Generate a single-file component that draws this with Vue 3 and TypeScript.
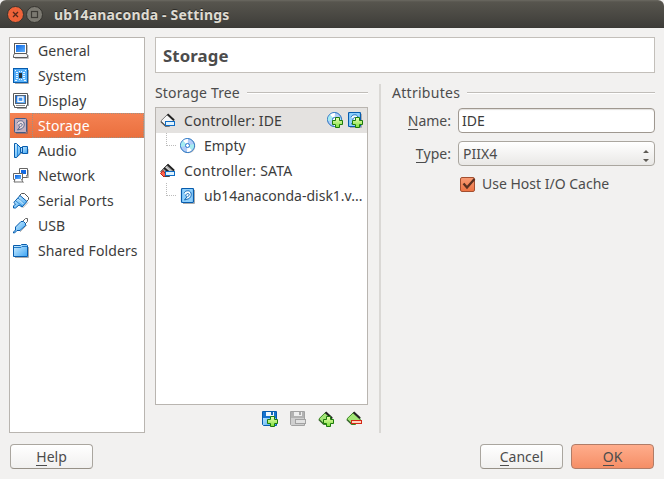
<script setup lang="ts">
import { ref } from 'vue'

interface Section { id: string; label: string }

const sections: Section[] = [
  { id: 'general', label: 'General' },
  { id: 'system', label: 'System' },
  { id: 'display', label: 'Display' },
  { id: 'storage', label: 'Storage' },
  { id: 'audio', label: 'Audio' },
  { id: 'network', label: 'Network' },
  { id: 'serial', label: 'Serial Ports' },
  { id: 'usb', label: 'USB' },
  { id: 'folders', label: 'Shared Folders' },
]
const current = ref('storage')
const hostCache = ref(true)
const name = ref('IDE')
</script>

<template>
  <div class="window">
    <svg class="defs" width="0" height="0" aria-hidden="true">
      <defs>
        <linearGradient id="blue" x1="0" y1="0" x2="1" y2="1">
          <stop offset="0" stop-color="#0a62e0" /><stop offset="1" stop-color="#62b4ff" />
        </linearGradient>
        <linearGradient id="sky" x1="0" y1="0" x2="1" y2="1">
          <stop offset="0" stop-color="#d8f2ff" /><stop offset="1" stop-color="#3ba4f4" />
        </linearGradient>
        <linearGradient id="green" x1="0" y1="0" x2="0" y2="1">
          <stop offset="0" stop-color="#f0ffb8" /><stop offset="1" stop-color="#7be03a" />
        </linearGradient>
        <symbol id="i-general" viewBox="0 0 16 16">
          <path d="M14.5 2v8M15.5 12v3.5H2" fill="none" stroke="#aaa" opacity=".7" />
          <rect x="1.5" y=".5" width="12" height="10" fill="#fff" stroke="#5b5b5b" />
          <rect x="3" y="2" width="9" height="7" fill="url(#blue)" />
          <path d="M1.5 10.5h12l1 2v2H.5v-2z" fill="#f4f4f4" stroke="#5b5b5b" />
        </symbol>
        <symbol id="i-system" viewBox="0 0 16 16">
          <rect x=".5" y=".5" width="14" height="14" fill="url(#blue)" stroke="#075cad" />
          <rect x="1" y="1" width="13" height="13" fill="#62bcfc" opacity=".75" />
          <path d="M15.5 2v13.5H2" fill="none" stroke="#aaa" />
          <rect x="6" y="5" width="3" height="5" fill="#26333d" />
          <path d="M3 4.5h2M3 6.500h2M3 8.500h2M3 10.500h2M10 4.500h2M10 6.500h2M10 8.500h2M10 10.500h2M6 3.500h1M8 3.500h1M6 11.500h1M8 11.500h1M2 2.500h1M2 12.500h2M12 2.500h1M11 12.500h2" stroke="#fff" opacity=".9" />
        </symbol>
        <symbol id="i-display" viewBox="0 0 16 16">
          <path d="M15.5 2v11M4 15.5h10" stroke="#aaa" />
          <path d="M.5.5h14v12h-1v2h-12v-2h-1z" fill="#fff" stroke="#5b5b5b" />
          <rect x="2.5" y="2.5" width="10" height="8" fill="url(#blue)" stroke="#567" />
          <rect x="5" y="4" width="5" height="4.5" fill="#3d91ef" stroke="#fff" stroke-width="1.4" />
          <path d="M3 12.5h9" stroke="#888" />
        </symbol>
        <symbol id="i-storage" viewBox="0 0 16 16">
          <rect x="1.5" y=".5" width="12" height="14" rx="1" fill="#c3b0c0" stroke="#425b88" />
          <path d="M14.5 2v13.5H3" fill="none" stroke="#a06a5f" />
          <path d="M4 5.3C5 2.200 10 1.800 11 5s-1.400 6-4 6.200l-2.500.8 2.300-3C5 8.400 6 5.300 8 5.600s1.400 2.400-.6 3" fill="#eadce2" stroke="#54648b" />
        </symbol>
        <symbol id="i-disk" viewBox="0 0 16 16">
          <rect x="1.500" y=".5" width="12" height="14" rx="1" fill="#8ed0fd" stroke="#075cad" stroke-width="1.200" />
          <path d="M14.5 2v13.5H3" fill="none" stroke="#aaa" />
          <path d="M4 5.300C5 2.200 10 1.800 11 5s-1.400 6-4 6.200l-2.500.8 2.300-3C5 8.400 6 5.300 8 5.600s1.400 2.400-.6 3" fill="#f2fbff" stroke="#1266b6" />
        </symbol>
        <symbol id="i-audio" viewBox="0 0 16 16">
          <path d="M3 15l5-4.500h7V6" fill="none" stroke="#aaa" />
          <path d="M1.500.5h2L8 5v4.500l-4.500 5h-2z" fill="url(#sky)" stroke="#075cad" />
          <path d="M7.500 4.500h2v-1h5v7h-5v-1h-2z" fill="url(#sky)" stroke="#075cad" />
          <path d="M4.500 2v11" stroke="#2b8ee2" />
          <path d="M9.500 4v6" stroke="#0759ad" />
        </symbol>
        <symbol id="i-network" viewBox="0 0 16 16">
          <path d="M6.500.5h8v7h-1l1 2h-8z" fill="#fff" stroke="#666" />
          <rect x="8" y="2" width="5" height="4" fill="#1169e5" />
          <path d="M.5 5.500h9v6h-1l1.500 2.500h-9l1-2.500H.5z" fill="#fff" stroke="#666" />
          <rect x="2" y="7" width="6" height="4" fill="url(#blue)" />
          <path d="M11 14.500H3M15.500 2v8" stroke="#bbb" />
        </symbol>
        <symbol id="i-serial" viewBox="0 0 16 16">
          <path d="M6.500 2.500L8.500.5h3l4 4v2L12 10z" fill="#fff" stroke="#555" />
          <path d="M.8 9.500L7 2.500l7 6-5 5.500-3-2-3.500 3h-2v-2l2-2z" fill="url(#sky)" stroke="#075cad" />
          <path d="M5 5l6.500 6M3 8l6 5" stroke="#2f87cf" />
          <path d="M6 6.500l4.500 4.500" stroke="#e4f6ff" />
          <path d="M9.500 15l5.500-5.500" stroke="#aaa" />
        </symbol>
        <symbol id="i-usb" viewBox="0 0 16 16">
          <path d="M9.500 3.500l3-3h2v3l-3 3" fill="#fff" stroke="#666" />
          <path d="M2.500 9L8 3.500h2.500l2 2v2L7 12.500H4L1.500 15H.5v-1l2-2z" fill="url(#sky)" stroke="#075cad" />
          <path d="M7 14l7-7" stroke="#bbb" />
        </symbol>
        <symbol id="i-folders" viewBox="0 0 16 16">
          <path d="M.5 2.500h7l1-1h5l1 1v11H.5z" fill="url(#sky)" stroke="#075cad" />
          <path d="M1 4.500h7l1-1h5" fill="none" stroke="#237ac6" />
          <path d="M15.500 4v10.500H2" fill="none" stroke="#aaa" />
        </symbol>
        <symbol id="i-ide" viewBox="0 0 16 16">
          <path d="M.8 8L7.500 1.500l7 6.500-5 5.500H6z" fill="#f6f6f6" stroke="#777" />
          <path d="M7.500 1.300l6.500 6" stroke="#222" stroke-width="2" />
          <path d="M1 8.800l5 4.700" stroke="#555" stroke-width="1.200" />
          <rect x="5.500" y="8.500" width="9" height="4" fill="#dff3ff" stroke="#0f6cc4" />
        </symbol>
        <symbol id="i-sata" viewBox="0 0 16 16">
          <path d="M.8 8.500L7.500 1.500l7 6.500-5 5.500H5z" fill="#aaa" stroke="#444" />
          <path d="M7.500 1.500l6.500 6M4 5l6 5" stroke="#222" stroke-width="1.800" />
          <path d="M6 4l5 4.500" stroke="#ddd" />
          <path d="M.5 10.500l2.500-3 3 4-2 2.500z" fill="#ff654d" stroke="#bd2115" />
          <rect x="5.500" y="8.500" width="9" height="4" fill="#dff3ff" stroke="#0f6cc4" />
        </symbol>
        <symbol id="i-cd" viewBox="0 0 16 16">
          <circle cx="8.300" cy="8.300" r="7" fill="#aaa" opacity=".6" />
          <circle cx="7.500" cy="7.500" r="7" fill="#b0ccf8" stroke="#1f6fc0" />
          <path d="M7.500 7.500L3 2.700A6.500 6.500 0 0 1 8 1zM7.500 7.500L12 12a6 6 0 0 1-5 2z" fill="#fff" />
          <path d="M7.500 7.500L13.800 6a6 6 0 0 1-1.800 6zM7.500 7.500L1 9a6 6 0 0 1 2-6z" fill="#a5ecf0" />
          <circle cx="7.500" cy="7.500" r="2" fill="#fff" stroke="#2875cf" />
        </symbol>
        <symbol id="plus" viewBox="0 0 11 11">
          <path d="M3.500.5h4v3h3v4h-3v3h-4v-3h-3v-4h3z" fill="url(#green)" stroke="#1d7a0d" />
        </symbol>
        <symbol id="i-floppy" viewBox="0 0 16 16">
          <path d="M.5.5h14v14h-13l-1-1z" fill="url(#sky)" stroke="#075cad" />
          <rect x="1" y="1" width="3" height="6" fill="#1673cf" /><rect x="12" y="1" width="2" height="6" fill="#1673cf" />
          <rect x="4" y="1" width="8" height="4" fill="#eef8ff" /><rect x="9" y="1" width="2" height="3" fill="#1768b2" />
          <rect x="4" y="5" width="8" height="2" fill="#1673cf" />
        </symbol>
        <symbol id="i-floppy-off" viewBox="0 0 16 16">
          <path d="M.5.5h14v14h-13l-1-1z" fill="#cfcfcf" stroke="#a2a2a2" />
          <rect x="1" y="1" width="3" height="6" fill="#b2b2b2" /><rect x="12" y="1" width="2" height="6" fill="#b2b2b2" />
          <rect x="4" y="1" width="8" height="4" fill="#eee" /><rect x="9" y="1" width="2" height="3" fill="#aaa" />
          <rect x="4" y="5" width="8" height="2" fill="#b2b2b2" />
          <rect x="5.500" y="8.500" width="10" height="4" fill="#e2e2e2" stroke="#a2a2a2" />
        </symbol>
        <symbol id="i-card" viewBox="0 0 16 16">
          <path d="M.8 8L7.500 1.500l7 6.500-5 5.500H6z" fill="#a2e576" stroke="#3b8a22" />
          <path d="M7.500 1.300l6.500 6" stroke="#222" stroke-width="2.200" />
          <path d="M1 8.800l5 4.700" stroke="#3d6a30" stroke-width="1.400" />
        </symbol>
      </defs>
    </svg>

    <header class="titlebar">
      <svg class="controls" width="38" height="20" viewBox="0 0 38 20">
        <circle cx="9.500" cy="10.500" r="8" fill="#ef6339" stroke="#35342f" />
        <path d="M7 8l5 5M12 8l-5 5" stroke="#57281a" stroke-width="1.300" />
        <circle cx="28.500" cy="10.500" r="8" fill="#7c7a72" stroke="#35342f" />
        <rect x="25.500" y="7.500" width="6" height="6" fill="none" stroke="#3d3b36" stroke-width="1.200" />
      </svg>
      <span class="title">ub14anaconda - Settings</span>
    </header>

    <main class="body">
      <nav class="sidebar">
        <div v-for="s in sections" :key="s.id" class="section" :class="{ active: s.id === current }" @click="current = s.id">
          <svg width="16" height="16"><use :href="'#i-' + s.id" /></svg>
          <span class="caption">{{ s.label }}</span>
        </div>
      </nav>

      <section class="page">
        <h1 class="heading">Storage</h1>
        <div class="columns">
          <div class="tree-pane">
            <div class="legend"><span class="lg-tree">Storage Tree</span><i></i></div>
            <div class="tree">
              <div class="row selected">
                <svg width="16" height="16"><use href="#i-ide" /></svg>
                <span class="t-ide">Controller: IDE</span>
                <div class="row-actions">
                  <svg width="17" height="17"><use href="#i-cd" width="16" height="16" /><use href="#plus" x="5" y="5" width="11" height="11" /></svg>
                  <svg width="17" height="17"><use href="#i-disk" x="-1" width="16" height="16" /><use href="#plus" x="4" y="5" width="11" height="11" /></svg>
                </div>
              </div>
              <div class="row child">
                <i class="branch"></i>
                <svg width="16" height="16"><use href="#i-cd" /></svg>
                <span>Empty</span>
              </div>
              <div class="row">
                <svg width="16" height="16"><use href="#i-sata" /></svg>
                <span class="t-sata">Controller: SATA</span>
              </div>
              <div class="row child">
                <i class="branch"></i>
                <svg width="16" height="16"><use href="#i-disk" /></svg>
                <span>ub14anaconda-disk1.v...</span>
              </div>
            </div>
            <div class="toolbar">
              <svg width="17" height="17"><use href="#i-floppy" width="16" height="16" /><use href="#plus" x="5" y="5" width="11" height="11" /></svg>
              <svg width="17" height="17"><use href="#i-floppy-off" width="16" height="16" /></svg>
              <svg width="17" height="17"><use href="#i-card" width="16" height="16" /><use href="#plus" x="5" y="5" width="11" height="11" /></svg>
              <svg width="17" height="17"><use href="#i-card" width="16" height="16" /><rect x="5.500" y="9.500" width="10" height="3" fill="#ffd3bd" stroke="#d52817" /></svg>
            </div>
          </div>

          <div class="divider"></div>

          <div class="attributes">
            <div class="legend"><span class="lg-attr">Attributes</span><i></i></div>
            <label class="field">
              <span class="label"><u>N</u>ame:</span>
              <input v-model="name" class="input" />
            </label>
            <div class="field">
              <span class="label"><u>T</u>ype:</span>
              <div class="select">
                <span>PIIX4</span>
                <svg width="6" height="13" viewBox="0 0 6 13"><path d="M0 4l3-3 3 3zM0 10l3 3 3-3z" fill="#5e5b55" /></svg>
              </div>
            </div>
            <div class="check" @click="hostCache = !hostCache">
              <span class="box"><svg v-if="hostCache" width="15" height="14" viewBox="0 0 15 14"><path d="M2.500 6.500l3.500 4L13.500 2" fill="none" stroke="#5b3020" stroke-width="2.300" /></svg></span>
              <span>Use Host I/O Cache</span>
            </div>
          </div>
        </div>
      </section>
    </main>

    <footer class="footer">
      <button class="btn help"><u>H</u>elp</button>
      <button class="btn cancel"><u>C</u>ancel</button>
      <button class="btn ok"><u>O</u>K</button>
    </footer>
  </div>
</template>

<style>
body { margin: 0; background: #f2f1f0; }
</style>

<style scoped>
* { box-sizing: border-box; }
.window {
  width: 664px; height: 479px; display: flex; flex-direction: column;
  background: #f2f1f0; color: #4c4c4c; overflow: hidden;
  font: 14px/20px "Noto Sans", "Open Sans", sans-serif; white-space: nowrap;
}
.defs { position: absolute; }
svg { display: block; flex: none; }
u { text-decoration: none; border-bottom: 1px solid #4c4c4c; display: inline-block; line-height: 17px; }
.titlebar {
  height: 28px; flex: none; display: flex; align-items: center; padding-left: 6px;
  background: linear-gradient(#6b6961 0, #57554e 2px, #3e3d39 27px, #373632 28px);
  border-radius: 6px 6px 0 0; color: #dfdbd2;
}
.controls { margin-top: -1px; }
.title { margin-left: 10px; margin-top: 1px; font-weight: 700; letter-spacing: .18px; text-shadow: 0 -1px #2c2b27; }
.body { height: 405px; flex: none; display: flex; gap: 10px; padding: 9px 9px 0; }
.sidebar { width: 136px; height: 396px; flex: none; background: #fff; border: 1px solid #b9b5b0; color: #3c3c3c; }
.section { height: 25px; display: flex; align-items: center; padding-left: 3px; }
.caption { height: 25px; margin-left: 3px; flex: 1; padding-left: 5px; display: flex; align-items: center; border: 1px solid transparent; letter-spacing: .1px; }
.active { background: linear-gradient(#f58253, #ea6f3d); color: #fff; }
.active .caption { border: 1px dotted #9c9187; }
.page { flex: 1; min-width: 0; display: flex; flex-direction: column; }
.heading { margin: 0; height: 36px; display: flex; align-items: center; padding: 2px 0 0 7px; background: #fff; border: 1px solid #c3bfba; font-size: 16.8px; font-weight: 700; letter-spacing: .1px; }
.columns { flex: 1; display: flex; min-width: 0; }
.tree-pane { width: 213px; flex: none; padding-top: 10px; }
.legend { height: 20px; display: flex; align-items: center; gap: 7px; }
.legend i { flex: 1; height: 2px; background: #c0bdb9; border-bottom: 1px solid #fff; }
.lg-tree { letter-spacing: .15px; }
.lg-attr { letter-spacing: .28px; }
.tree { height: 298px; margin-top: 4px; background: #fff; border: 1px solid #b9b5b0; color: #3c3c3c; }
.row { height: 25px; display: flex; align-items: center; padding-left: 4px; gap: 8px; }
.t-ide { letter-spacing: .13px; }
.t-sata { letter-spacing: .24px; }
.selected { background: #e4e2e0; }
.row-actions { margin-left: auto; display: flex; gap: 4px; padding-right: 2px; }
.child { padding-left: 10px; }
.branch { width: 10px; height: 13px; margin-top: -12px; margin-right: -4px; border: dotted #bbb; border-width: 0 0 1px 1px; }
.toolbar { display: flex; justify-content: flex-end; gap: 11px; padding: 6px 5px 0 0; }
.divider { width: 2px; flex: none; height: 349px; margin: 11px 11px 0; background: #dad8d5; }
.attributes { flex: 1; min-width: 0; padding-top: 10px; }
.attributes .legend { margin-bottom: 5px; }
.field { display: flex; align-items: center; height: 25px; margin-bottom: 8px; gap: 7px; }
.label { width: 59px; flex: none; text-align: right; }
.input { flex: 1; min-width: 0; height: 25px; margin: 0; padding: 0 3px; font: inherit; color: #3c3c3c; border: 1px solid #9f9890; border-radius: 4px; background: #fff; outline: 0; box-shadow: inset 0 1px 1px #e2dfdc; }
.select { flex: 1; height: 25px; display: flex; align-items: center; justify-content: space-between; padding: 0 5px 0 4px; border: 1px solid #aaa69f; border-radius: 4px; background: linear-gradient(#fff, #e9e8e6); }
.select svg { margin-top: 4px; }
.check { display: flex; align-items: center; padding-left: 68px; gap: 7px; }
.box { width: 15px; height: 15px; border: 1px solid #a34f30; border-radius: 2px; background: linear-gradient(#f79a73, #ee7444); }
.box svg { margin-top: -1px; }
.footer { display: flex; padding: 11px 10px 0; }
.btn { width: 83px; height: 25px; margin: 0; padding: 0; border: 1px solid #aaa69f; border-bottom-color: #979188; border-radius: 4px; background: linear-gradient(#fff, #f1f0ef); font: inherit; color: #4c4c4c; }
.help { margin-right: auto; }
.ok { margin-left: 8px; background: linear-gradient(#ffad8c, #f58e66); border-color: #b07c67; }
</style>
